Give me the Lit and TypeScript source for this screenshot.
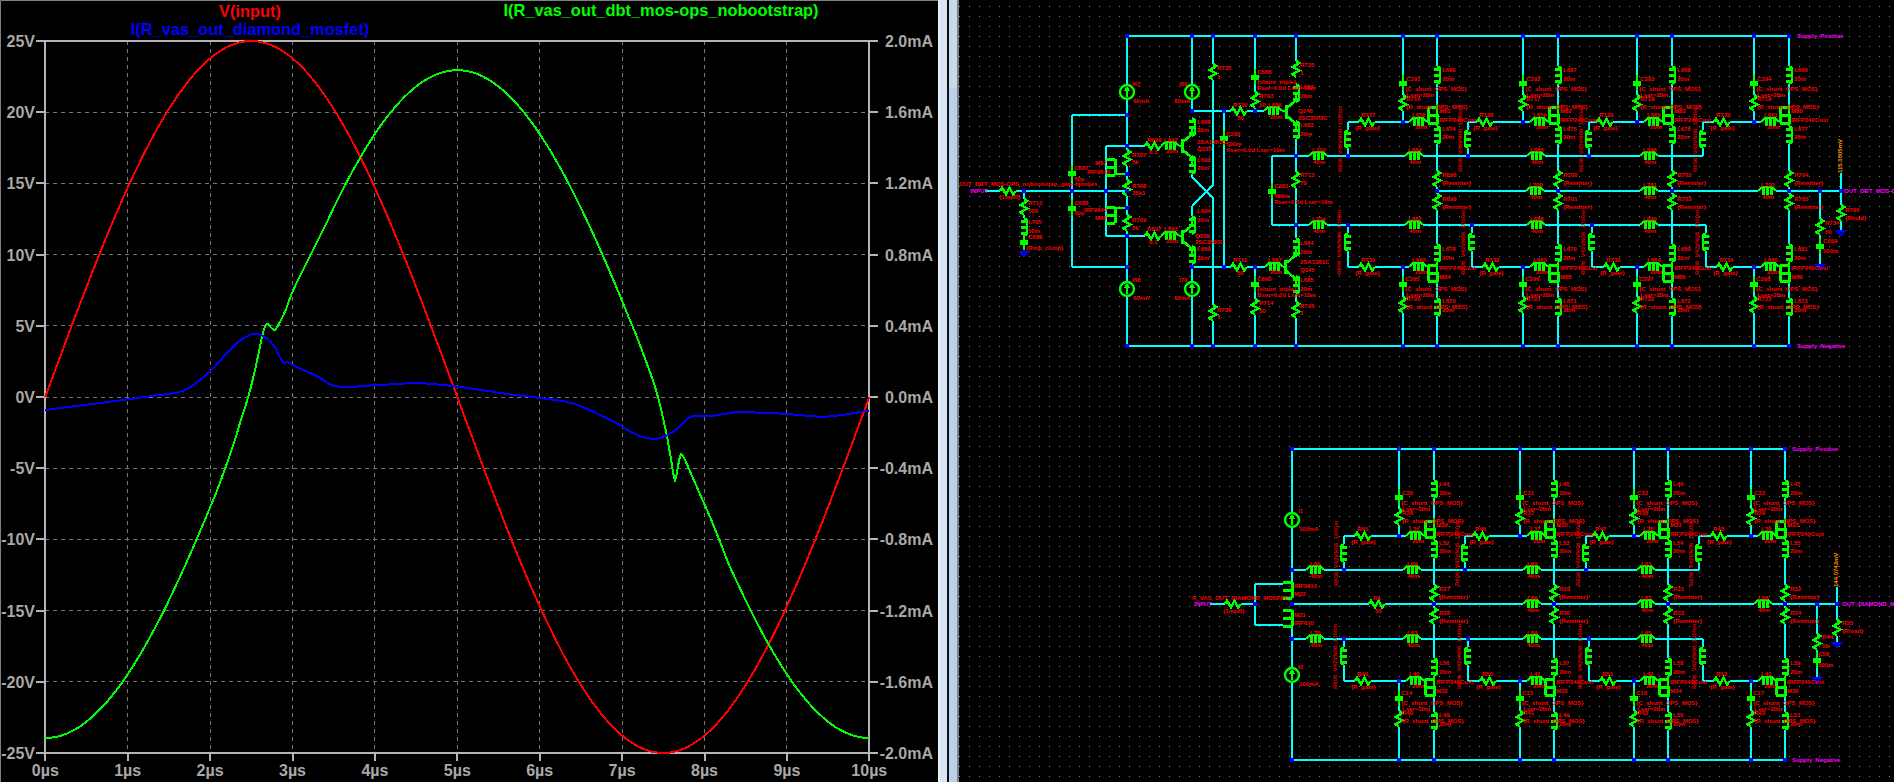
import { LitElement, html, svg, css } from "lit";
import { customElement } from "lit/decorators.js";

/* ---------- waveform plot ---------- */
const X0 = 45.3, XS = 82.4, YT = 41, YB = 753, YC = 397;
const xOf = (t: number) => X0 + XS * t;

function smooth(p: number[][]): string {
  let d = `M${p[0][0].toFixed(1)} ${p[0][1].toFixed(1)}`;
  for (let i = 0; i < p.length - 1; i++) {
    const a = p[Math.max(i - 1, 0)], b = p[i], c = p[i + 1], e = p[Math.min(i + 2, p.length - 1)];
    const c1x = b[0] + (c[0] - a[0]) / 6, c1y = b[1] + (c[1] - a[1]) / 6;
    const c2x = c[0] - (e[0] - b[0]) / 6, c2y = c[1] - (e[1] - b[1]) / 6;
    d += `C${c1x.toFixed(1)} ${c1y.toFixed(1)} ${c2x.toFixed(1)} ${c2y.toFixed(1)} ${c[0].toFixed(1)} ${c[1].toFixed(1)}`;
  }
  return d;
}

const redPts: number[][] = [];
for (let t = 0; t <= 10.001; t += 0.05) redPts.push([xOf(t), YC - 356 * Math.sin((2 * Math.PI * t) / 10)]);

const greenModel = (t: number) => YC - 178 * (-1.876 * Math.cos((2 * Math.PI * t) / 10) - 0.04);
const greenPts: number[][] = [];
for (let t = 0; t <= 2.2; t += 0.1) greenPts.push([xOf(t), greenModel(t)]);
greenPts.push(
  [233.3, 445], [240, 423], [248.3, 396.7], [255, 370], [260, 346.7], [263.3, 331.7], [267.3, 324],
  [271.7, 328.3], [275, 330], [278.3, 325], [285, 311.7], [293.3, 290], [308, 260], [320, 236],
);
for (let t = 3.4; t <= 7.21; t += 0.1) greenPts.push([xOf(t), greenModel(t)]);
greenPts.push([656, 390], [666.7, 435], [674, 477], [676, 477], [680, 456.7], [683.3, 456.7], [696.7, 486.7], [711.7, 521]);
for (let t = 8.3; t <= 10.001; t += 0.1) greenPts.push([xOf(t), greenModel(t)]);

const bluePts: number[][] = [
  [45, 410], [100, 403], [160, 395], [173.3, 393.3], [186.7, 389.3], [200, 380], [213.3, 368.3], [226.7, 353.3],
  [240, 340.7], [250, 335], [256.7, 333.7], [266.7, 338.3], [275, 347.3], [282.7, 361.7], [288.3, 362.7],
  [301.7, 369.3], [316.7, 376], [333.3, 385.7], [353.3, 386.7], [376.7, 385], [400, 384], [417, 383], [457, 386.5],
  [507, 394], [568, 402.2], [600, 415], [616.7, 423.3], [633.3, 433.3], [646.7, 438], [660, 438], [673.3, 431.7],
  [688.3, 418.3], [695, 416], [713.3, 415.7], [738.3, 412], [760, 412.7], [786.7, 414], [820, 416.7], [840, 415.3], [869, 410.5],
];

/* ---------- schematic ---------- */
type Lab = { x: number; y: number; s: string; c: string; rot?: boolean };
interface Sch { w: string; g: string; t: string; e: string; j: string; b: string; labs: Lab[]; circles: number[][] }

function build(): Sch {
  let w = "", g = "", tk = "", e = "", j = "", b = "";
  const labs: Lab[] = [];
  const circles: number[][] = [];
  const W = (...p: number[]) => {
    w += `M${p[0]} ${p[1]}`;
    for (let i = 2; i < p.length; i += 2) w += `L${p[i]} ${p[i + 1]}`;
  };
  const J = (x: number, y: number) => { j += `M${x - 2} ${y - 2}h4v4h-4z`; };
  const T = (x: number, y: number, s: string, c = "lbl") => { labs.push({ x, y: y + 2, s, c }); };
  const ROT = (x: number, y: number, s: string, c = "lbl dim") => { labs.push({ x, y, s, c, rot: true }); };
  const E = (x: number, y: number, ww: number, h: number) => { e += `M${x - ww} ${y - h}h${ww * 2}v${h * 2}h${-ww * 2}z`; };

  const RV = (x: number, y: number) => {
    E(x, y, 2, 8);
    g += `M${x} ${y - 8}L${x + 3.5} ${y - 6}L${x - 3.5} ${y - 2}L${x + 3.5} ${y + 1.5}L${x - 3.5} ${y + 5}L${x} ${y + 8}`;
  };
  const RH = (x: number, y: number) => {
    E(x, y, 8, 2);
    g += `M${x - 8} ${y}L${x - 6} ${y - 3.5}L${x - 2} ${y + 3.5}L${x + 1.5} ${y - 3.5}L${x + 5} ${y + 3.5}L${x + 8} ${y}`;
  };
  const LV = (x: number, y: number, left = false) => {
    E(x, y, 2, 9);
    const s = left ? -1 : 1;
    g += `M${x} ${y - 9}L${x + 3 * s} ${y - 7}V${y + 7}L${x} ${y + 9}`;
    const o = x + 3 * s, i = x - 3 * s;
    tk += `M${o} ${y - 6}H${i}M${o} ${y}H${i}M${o} ${y + 6}H${i}`;
  };
  const LH = (x: number, y: number, ww = 9) => {
    E(x, y, ww, 2);
    g += `M${x - ww} ${y}L${x - 5} ${y - 4}H${x + 5}L${x + ww} ${y}`;
    tk += `M${x - 4} ${y - 4}V${y + 4}M${x} ${y - 4}V${y + 4}M${x + 4} ${y - 4}V${y + 4}`;
  };
  const CAP = (x: number, y: number) => {
    g += `M${x} ${y - 8}V${y + 8}`;
    tk += `M${x - 4} ${y - 1}H${x + 4}M${x - 4} ${y + 1}H${x + 4}`;
  };
  const IS = (x: number, y: number) => {
    E(x, y, 7, 7);
    circles.push([x, y]);
    g += `M${x} ${y - 5}V${y + 5}M${x - 2} ${y - 1}L${x} ${y - 4}L${x + 2} ${y - 1}`;
  };
  const MOS = (D: number, y: number) => {
    E(D, y, 2, 8);
    tk += `M${D - 9} ${y - 8}H${D}M${D - 9} ${y - 8}V${y + 8}M${D - 9} ${y}H${D}V${y + 9}M${D - 9} ${y + 8}H${D}`;
  };
  const MOSL = (X: number, y: number) => {
    tk += `M${X + 9} ${y - 8}H${X}M${X + 9} ${y - 8}V${y + 8}M${X + 9} ${y}H${X}M${X + 9} ${y + 8}H${X}`;
  };
  const BJT = (x: number, y: number, X: number) => {
    tk += `M${x} ${y - 7}V${y + 7}`;
    g += `M${x} ${y - 3}L${X} ${y - 12}V${y - 20}M${x} ${y + 3}L${X} ${y + 12}V${y + 18}`;
  };
  const GND = (x: number, y: number) => { b += `M${x - 4} ${y}H${x + 4}L${x} ${y + 4}Z`; };

  /* ---- upper circuit: driver part ---- */
  const top = 36, bot = 346;
  W(1127, top, 1789, top);
  W(1127, bot, 1789, bot);
  W(1127, top, 1127, bot);
  IS(1127, 92); IS(1127, 289);
  W(1192, top, 1192, 111); IS(1192, 92);
  W(1192, 267, 1192, bot); IS(1192, 289);
  W(1213, top, 1213, 185, 1192, 206);
  W(1192, 177, 1213, 198, 1213, bot);
  RV(1213, 72); RV(1213, 313);
  W(1192, 111, 1296 - 22, 111);
  W(1192, 267, 1296 - 22, 267);
  W(1224, 111, 1224, 267);
  RH(1239, 111); RH(1239, 267);
  CAP(1224, 138);
  W(1255, top, 1255, 111); CAP(1255, 77); RV(1255, 100);
  W(1255, 267, 1255, bot); CAP(1255, 284); RV(1255, 307);
  LH(1273, 111); LH(1274, 267);
  g += "M1282 111H1286M1283 267H1286";
  W(1296, top, 1296, 75); RV(1296, 69);
  BJT(1286, 112, 1296); LV(1296, 93);
  LV(1296, 130); W(1296, 139, 1296, 225);
  RV(1296, 180);
  W(1296, 225, 1296, 238);
  LV(1296, 247); BJT(1285, 267, 1296);
  LV(1296, 285); W(1296, 292, 1296, bot); RV(1296, 310);

  BJT(1182, 146, 1192); LV(1194 - 2, 127);
  LV(1192, 165);
  BJT(1182, 237, 1192); LV(1192, 225); LV(1192, 255);
  W(1192, 173, 1192, 177); W(1192, 206, 1192, 216);
  W(1106, 146, 1148, 146); W(1106, 236, 1148, 236);
  W(1106, 146, 1106, 236);
  RH(1153, 146); RH(1153, 236);
  LH(1170, 146); LH(1170, 236);
  g += "M1179 146H1182M1179 236H1182";
  W(1072, 115, 1127, 115);
  W(1072, 267, 1127, 267);
  W(1072, 115, 1072, 267);
  CAP(1072, 173); CAP(1072, 208);
  W(985, 191, 1106, 191);
  RH(1008, 191);
  W(1024, 191, 1024, 250);
  RV(1024, 207); LV(1024, 227); CAP(1024, 242);
  GND(1024, 252);
  RV(1127, 158); RV(1127, 188); RV(1127, 223);
  MOSL(1106, 167); MOSL(1106, 215);
  g += "M1115 174H1127M1115 208H1127";
  W(1115, 174, 1127, 174); 
  [[1127, top], [1192, top], [1213, top], [1255, top], [1296, top], [1127, bot], [1192, bot], [1213, bot], [1255, bot], [1296, bot],
   [1127, 115], [1127, 146], [1127, 174], [1127, 191], [1127, 208], [1127, 236], [1127, 267],
   [1192, 111], [1224, 111], [1255, 111], [1192, 267], [1224, 267], [1255, 267],
   [1024, 191], [1072, 191], [1106, 191], [1296, 156], [1296, 225],
  ].forEach((p) => J(p[0], p[1]));
  W(1127, 191, 1106, 191);

  [
    [1132, 84, "I67"], [1133, 101, "60mA"], [1179, 84, "I69"], [1174, 101, "60mA"], [1217, 68, "R735"], [1217, 77, "1"],
    [1257, 72, "C688"], [1257, 82, "{shunt_triple}"], [1257, 88, "Rser=0.0d Lser=10m"], [1259, 96, "R703"], [1259, 105, "50"],
    [1233, 105, "R730"], [1237, 118, "50"], [1197, 122, "L688"], [1197, 130, "20m"], [1226, 134, "C390"], [1226, 144, "500m"],
    [1226, 150, "Rser=0.0d Lser=10m"], [1197, 142, "2SA1381C"], [1197, 149, "Q235"], [1197, 160, "L690"], [1197, 168, "20m"],
    [1147, 140, "R696"], [1149, 152, "0.1"], [1164, 140, "L692"], [1166, 151, "20m"], [1132, 155, "R707"], [1132, 162, "5k"],
    [1132, 186, "R708"], [1132, 193, "25k1"], [1095, 163, "M87"], [1087, 172, "IRF9640"], [1074, 168, "C687"], [1074, 179, "50p"],
    [959, 184, "OUT_DBT_MOS-OPS_nobootstrap_gate-families"], [999, 197, "{1mpR}"],
    [1028, 203, "R715"], [1028, 211, "500"], [1028, 222, "L705"], [1028, 231, "50m"], [1028, 237, "C686"], [1026, 248, "{Rmp_comp}"],
    [1074, 203, "C688"], [1074, 213, "50p"], [1084, 210, "IRF9640"], [1095, 218, "M88"], [1132, 220, "R709"], [1132, 228, "5k"],
    [1147, 229, "R697"], [1149, 242, "0.1"], [1164, 229, "L693"], [1166, 241, "20m"], [1197, 211, "L694"], [1197, 220, "20m"],
    [1195, 236, "Q236"], [1195, 242, "2SC3503C"], [1197, 249, "L689"], [1197, 258, "20m"], [1233, 260, "R711"], [1237, 273, "50"],
    [1132, 280, "I68"], [1133, 298, "60mA"], [1179, 280, "I70"], [1174, 298, "60mA"], [1217, 310, "R736"], [1217, 317, "1"],
    [1257, 279, "C690"], [1257, 289, "{shunt_triple}"], [1257, 295, "Rser=0.0d Lser=10m"], [1259, 303, "R714"], [1259, 311, "50"],
    [1300, 65, "R725"], [1300, 73, "1"], [1300, 87, "L682"], [1300, 96, "20m"], [1268, 105, "L686"], [1270, 117, "20m"],
    [1298, 111, "Q246"], [1298, 118, "2SC3503C"], [1300, 125, "L683"], [1300, 134, "20m"], [1312, 150, "L703"], [1313, 162, "40m"],
    [1300, 175, "R713"], [1300, 183, "70"], [1274, 186, "C381"], [1274, 196, "500m"], [1274, 202, "Rser=0.0d Lser=10m"],
    [1312, 219, "L704"], [1313, 231, "40m"], [1300, 243, "L684"], [1300, 252, "20m"], [1300, 262, "2SA1381C"], [1300, 270, "Q345"],
    [1300, 280, "L685"], [1300, 289, "20m"], [1300, 306, "R726"], [1300, 313, "1"], [1268, 260, "L687"], [1270, 272, "20m"],
  ].forEach((l) => T(l[0] as number, l[1] as number, l[2] as string));
  T(970, 191, "INPUT", "lbl net");

  /* rails of the upper output stage */
  W(1272, 156, 1703, 156); W(1272, 225, 1706, 225); W(1272, 156, 1272, 225); CAP(1272, 191);
  W(1437, 191, 1841, 191);
  [1318].forEach((x) => { LH(x, 156); LH(x, 225); });
  [1414, 1536, 1649].forEach((x) => { LH(x, 156); LH(x, 225); });
  LH(1535, 191); LH(1649, 191); LH(1767, 191);
  [[1414, "L684"], [1536, "L685"], [1649, "L696"]].forEach(([x, n]) => {
    T((x as number) - 6, 150, n as string); T((x as number) - 5, 162, "40m");
  });
  [[1414, "L687"], [1536, "L688"], [1649, "L699"]].forEach(([x, n]) => {
    T((x as number) - 6, 219, n as string); T((x as number) - 5, 231, "40m");
  });
  [[1535, "L700"], [1649, "L791"], [1767, "L793"]].forEach(([x, n]) => {
    T((x as number) - 6, 185, n as string); T((x as number) - 5, 197, "40m");
  });

  /* output-stage columns, shared by both circuits */
  type Cfg = {
    dy: number; top: number; out: number; D: number[]; C: number[];
    uG: number[]; uR: number[]; uL: number[]; lG: number[]; lR: number[]; lL: number[];
    n: Record<string, string[]>;
  };
  const stages = (c: Cfg) => {
    const d = c.dy, bt = 346 + d, up = 156 + d, lo = 225 + d, gu = 122 + d, gl = 267 + d;
    c.D.forEach((D, i) => {
      const C = c.C[i], n = c.n;
      W(D, c.top, D, bt);
      W(C, c.top, C, gu); W(C, gl, C, bt);
      J(D, c.top); J(C, c.top); J(D, bt); J(C, bt); J(C, gu); J(C, gl); J(D, c.out);
      LV(D, 75 + d); MOS(D, 115 + d); g += `M${D} ${104 + d}V${126 + d}`; LV(D, 135 + d);
      RV(D, 179 + d); RV(D, 202 + d);
      LV(D, 253 + d); MOS(D, 273 + d); g += `M${D} ${262 + d}V${284 + d}`; LV(D, 307 + d);
      CAP(C, 83 + d); RV(C, 103 + d); CAP(C, 284 + d); RV(C, 305 + d);
      const G = c.uG[i], G2 = c.lG[i];
      W(G, gu, c.uL[i] - 9, gu); W(G, up, G, gu); LV(G, 139 + d, true); RH(c.uR[i], gu);
      LH(c.uL[i], gu); g += `M${c.uL[i] + 9} ${gu}H${D - 9}`;
      W(G2, gl, c.lL[i] - 9, gl); W(G2, lo, G2, gl); LV(G2, 242 + d, true); RH(c.lR[i], gl);
      LH(c.lL[i], gl); g += `M${c.lL[i] + 9} ${gl}H${D - 9}`;
      if (i < 3) { J(G, up); J(G2, lo); }

      T(C + 3, 79 + d, n.cu[i]); T(C + 2, 89 + d, "{C_shunt_OPS_MOS}"); T(C + 3, 95 + d, "Lser=20m"); T(C + 3, 99 + d, n.ru[i]);
      T(C + 3, 107 + d, "{R_shunt_OPS_MOS}");
      T(D + 5, 70 + d, n.ld[i]); T(D + 5, 79 + d, "20m");
      T(D + 2, 111 + d, n.mu[i]); T(D + 2, 120 + d, "IRFP240Cust");
      T(D + 5, 129 + d, n.ls[i]); T(D + 5, 137 + d, "20m");
      T(D + 5, 175 + d, n.e1[i]); T(D + 5, 183 + d, "{Remitter}");
      T(D + 5, 199 + d, n.e2[i]); T(D + 5, 207 + d, "{Remitter}");
      T(c.uR[i] - 6, 115 + d, n.gu[i]); T(c.uR[i] - 12, 128 + d, "{R_gate}");
      T(c.uL[i] - 6, 115 + d, n.lu[i]); T(c.uL[i] - 3, 127 + d, "20m");
      ROT(G - 6, 172 + d, "R606_V42VN06_1000m");
      T(c.lR[i] - 6, 260 + d, n.gl[i]); T(c.lR[i] - 12, 273 + d, "{R_gate}");
      T(c.lL[i] - 6, 260 + d, n.ll[i]); T(c.lL[i] - 3, 272 + d, "20m");
      T(D + 2, 268 + d, "IRFP240Cust"); T(D + 2, 277 + d, n.ml[i]);
      T(C + 2, 279 + d, n.cl[i]); T(C + 2, 289 + d, "{C_shunt_OPS_MOS}"); T(C + 3, 295 + d, "Lser=20m"); T(C + 3, 299 + d, n.rl[i]);
      T(C + 3, 307 + d, "{R_shunt_OPS_MOS}");
      T(D + 5, 249 + d, n.lt[i]); T(D + 5, 258 + d, "20m"); T(D + 5, 301 + d, n.lb[i]); T(D + 5, 310 + d, "20m");
      ROT(G2 - 7, 275 + d, "R606_V42VN06_1000m");
    });
  };

  stages({
    dy: 0, top: 36, out: 191,
    D: [1437, 1558, 1672, 1789], C: [1403, 1523, 1637, 1754],
    uG: [1348, 1468, 1589, 1703], uR: [1367, 1485, 1605, 1722], uL: [1418, 1539, 1653, 1770],
    lG: [1348, 1472, 1592, 1706], lR: [1367, 1491, 1612, 1725], lL: [1418, 1539, 1653, 1770],
    n: {
      cu: ["C391", "C392", "C393", "C394"], ru: ["R716", "R717", "R718", "R719"], ld: ["L666", "L667", "L668", "L669"],
      mu: ["M81", "M82", "M83", "M80"], ls: ["L674", "L675", "L676", "L677"], e1: ["R698", "R700", "R702", "R704"],
      e2: ["R699", "R701", "R703", "R705"], gu: ["R727", "R728", "R729", "R730"], lu: ["L658", "L659", "L660", "L661"],
      gl: ["R731", "R732", "R733", "R734"], ll: ["L662", "L663", "L664", "L665"], ml: ["M84", "M85", "M86", "M89"],
      cl: ["C395", "C396", "C397", "C398"], rl: ["R720", "R721", "R722", "R723"], lt: ["L678", "L679", "L680", "L681"],
      lb: ["L670", "L671", "L672", "L673"],
    },
  });

  /* upper circuit output */
  W(1820, 191, 1820, 265); RV(1820, 227); CAP(1820, 246); GND(1820, 265);
  W(1841, 173, 1841, 231); RV(1841, 213); GND(1841, 231);
  J(1820, 191); J(1841, 191);
  T(1825, 223, "R734"); T(1825, 232, "50"); T(1823, 241, "C699"); T(1823, 251, "500m"); T(1845, 210, "R706"); T(1845, 218, "{Rload}");
  ROT(1842, 173, "115.0005mV", "lbl probe");
  T(1797, 36, "Supply_Positive", "lbl net");
  T(1797, 346, "Supply_Negative", "lbl net");
  T(1844, 191, "OUT_DBT_MOS-OPS", "lbl net");

  /* ---- lower circuit ---- */
  const t2 = 449, b2 = 760;
  W(1292, t2, 1785, t2); W(1292, b2, 1785, b2);
  W(1292, t2, 1292, 582); W(1292, 626, 1292, b2);
  IS(1292, 520); IS(1292, 675);
  W(1292, 570, 1699, 570); W(1292, 639, 1703, 639); W(1292, 604, 1837, 604);
  W(1210, 604, 1255, 604); RH(1233, 604);
  W(1255, 584, 1283, 584); W(1255, 625, 1283, 625); W(1255, 584, 1255, 625);
  MOSL(1283, 590); MOSL(1283, 618);
  g += "M1292 582V598M1292 610V626";
  RH(1377, 604);
  [1315, 1412, 1532, 1646].forEach((x) => { LH(x, 570); LH(x, 639); });
  [1532, 1646, 1763].forEach((x) => LH(x, 604));
  [[1292, t2], [1292, 570], [1292, 604], [1292, 639], [1292, b2], [1255, 604]].forEach((p) => J(p[0], p[1]));
  [[1315, "L60"], [1412, "L69"], [1532, "L62"], [1646, "L61"]].forEach(([x, n]) => {
    T((x as number) - 5, 564, n as string); T((x as number) - 5, 575 + 1, "40m");
  });
  [[1315, "L70"], [1412, "L63"], [1532, "L64"], [1646, "L65"]].forEach(([x, n]) => {
    T((x as number) - 5, 633, n as string); T((x as number) - 5, 645, "40m");
  });
  [[1532, "L66"], [1646, "L67"], [1763, "L68"]].forEach(([x, n]) => {
    T((x as number) - 5, 598, n as string); T((x as number) - 5, 610, "40m");
  });
  [
    [1298, 511, "I1"], [1299, 529, "100mA"], [1298, 667, "I2"], [1299, 684, "100mA"], [1294, 586, "IRF9610"], [1294, 594, "M22"],
    [1294, 615, "M21"], [1294, 623, "IRF610"], [1192, 598, "R_VAS_OUT_DIAMOND_MOSFET"], [1223, 611, "{1mpR}"], [1373, 598, "R1"], [1375, 611, "50"],
    [1822, 637, "R44"], [1822, 646, "50"], [1818, 654, "C58"], [1818, 665, "500m"], [1842, 623, "R35"], [1842, 631, "{Rload}"],
  ].forEach((l) => T(l[0] as number, l[1] as number, l[2] as string));
  T(1194, 604, "INPUT", "lbl net");

  stages({
    dy: 414, top: 449, out: 604,
    D: [1434, 1554, 1668, 1785], C: [1399, 1520, 1634, 1751],
    uG: [1344, 1465, 1586, 1699], uR: [1363, 1481, 1601, 1719], uL: [1415, 1536, 1649, 1767],
    lG: [1344, 1468, 1589, 1703], lR: [1363, 1488, 1608, 1722], lL: [1415, 1536, 1649, 1767],
    n: {
      cu: ["C30", "C31", "C32", "C33"], ru: ["R36", "R37", "R38", "R39"], ld: ["L44", "L45", "L46", "L47"],
      mu: ["M29", "M30", "M31", "M33"], ls: ["L52", "L53", "L54", "L55"], e1: ["R27", "R29", "R31", "R32"],
      e2: ["R28", "R30", "R33", "R34"], gu: ["R45", "R46", "R47", "R48"], lu: ["L36", "L37", "L38", "L39"],
      gl: ["R49", "R50", "R51", "R52"], ll: ["L40", "L41", "L42", "L43"], ml: ["M32", "M35", "M34", "M36"],
      cl: ["C14", "C15", "C16", "C17"], rl: ["R40", "R41", "R42", "R43"], lt: ["L56", "L57", "L58", "L59"],
      lb: ["L48", "L49", "L50", "L51"],
    },
  });
  W(1817, 604, 1817, 678); RV(1817, 642); CAP(1817, 660); GND(1817, 678);
  W(1837, 587, 1837, 643); RV(1837, 628); GND(1837, 643);
  J(1817, 604); J(1837, 604);
  ROT(1838, 587, "144.0743mV", "lbl probe");
  T(1792, 449, "Supply_Positive", "lbl net");
  T(1792, 760, "Supply_Negative", "lbl net");
  T(1842, 604, "OUT_DIAMOND_MOS", "lbl net");

  return { w, g, t: tk, e, j, b, labs, circles };
}

const SCH = build();

@customElement("app-root")
export class AppRoot extends LitElement {
  static styles = css`
    :host { display: flex; width: 1894px; height: 782px; overflow: hidden; background: #000; }
    .plot { flex: 0 0 938px; height: 782px; display: block; background: #000; }
    .split-a { flex: 0 0 9px; background: linear-gradient(90deg, #f4f8fc 0, #d7e5f4 25%, #d7e5f4 100%); }
    .split-line { flex: 0 0 2px; background: #101010; }
    .split-b { flex: 0 0 8px; background: linear-gradient(180deg, #c9d9ea 0, #c9d9ea 88px, #b9d1ea 88px, #b9d1ea 100%); }
    .split-edge { flex: 0 0 2px; background: #808080; }
    .sch { flex: 0 0 935px; height: 782px; display: block; background: #000; }

    .frame { stroke: #808080; stroke-width: 1; fill: none; }
    .grid { stroke: #777; stroke-width: 1; stroke-dasharray: 4 4; fill: none; shape-rendering: crispEdges; }
    .axis { stroke: #b4b4b4; stroke-width: 2; fill: none; shape-rendering: crispEdges; }
    .tick { font: bold 16px "Liberation Sans", Arial, sans-serif; fill: #a8a8a8; }
    .ttl { font: bold 16.4px "Liberation Sans", Arial, sans-serif; text-anchor: middle; }
    .tr { fill: #ff0000; } .tg { fill: #00ff00; } .tb { fill: #0000ff; }
    .trace { fill: none; stroke-width: 2; stroke-linejoin: round; shape-rendering: crispEdges; }
    .sr { stroke: #ff0000; } .sg { stroke: #00ff00; } .sb { stroke: #0000ff; }

    .wire { stroke: #00ffff; stroke-width: 2; fill: none; shape-rendering: crispEdges; }
    .erase { fill: #000; }
    .comp { stroke: #00ff00; stroke-width: 2.4; fill: none; shape-rendering: crispEdges; }
    .comb { stroke: #00ff00; stroke-width: 3; fill: none; shape-rendering: crispEdges; }
    .ring { stroke: #00ff00; stroke-width: 2.4; fill: #000; }
    .junc { fill: #0000ff; shape-rendering: crispEdges; }
    .gnd { stroke: #0000ff; stroke-width: 2; fill: none; }
    .lbl { font: bold 6px "Liberation Sans", Arial, sans-serif; fill: #ff0000; }
    .dim { fill: #d80000; }
    .net { fill: #ff00ff; }
    .probe { fill: #ff9900; }
    .dot { fill: #808080; }
  `;

  private plot() {
    const vs = [25, 20, 15, 10, 5, 0, -5, -10, -15, -20, -25];
    const ma = ["2.0", "1.6", "1.2", "0.8", "0.4", "0.0", "-0.4", "-0.8", "-1.2", "-1.6", "-2.0"];
    const ys = vs.map((_, i) => YT + i * 71.2);
    const ts = [0, 1, 2, 3, 4, 5, 6, 7, 8, 9, 10];
    return html`<svg class="plot" viewBox="0 0 938 782" width="938" height="782">
      <path class="frame" d="M.5 782V.5H938" />
      ${ys.slice(1, 10).map((y) => svg`<path class="grid" d="M45 ${y}H869" />`)}
      ${ts.slice(1, 10).map((t) => svg`<path class="grid" d="M${xOf(t)} 41V753" />`)}
      <path class="axis" d="M45 41H869V753H45Z" />
      ${ys.map((y) => svg`<path class="axis" d="M36 ${y}H45M869 ${y}H878" />`)}
      ${ts.map((t) => svg`<path class="axis" d="M${xOf(t)} 753V761" />`)}
      ${vs.map((v, i) => svg`<text class="tick" x="35" y=${ys[i] + 6} text-anchor="end">${v}V</text>`)}
      ${ma.map((m, i) => svg`<text class="tick" x="933" y=${ys[i] + 6} text-anchor="end">${m}mA</text>`)}
      ${ts.map((t) => svg`<text class="tick" x=${xOf(t)} y="776" text-anchor="middle">${t}µs</text>`)}
      <text class="ttl tr" x="250" y="17">V(input)</text>
      <text class="ttl tb" x="250" y="35">I(R_vas_out_diamond_mosfet)</text>
      <text class="ttl tg" x="661" y="16">I(R_vas_out_dbt_mos-ops_nobootstrap)</text>
      <path class="trace sr" d=${smooth(redPts)} />
      <path class="trace sg" d=${smooth(greenPts)} />
      <path class="trace sb" d=${smooth(bluePts)} />
    </svg>`;
  }

  private schematic() {
    const s = SCH;
    return html`<svg class="sch" viewBox="959 0 935 782" width="935" height="782">
      <defs>
        <pattern id="dots" x="969" y="6" width="10" height="10" patternUnits="userSpaceOnUse">
          <rect class="dot" width="1" height="1"></rect>
        </pattern>
      </defs>
      <rect x="959" y="0" width="935" height="782" fill="url(#dots)"></rect>
      <path class="wire" d=${s.w} />
      <path class="erase" d=${s.e} />
      ${s.circles.map((c) => svg`<circle class="ring" cx=${c[0]} cy=${c[1]} r="7"></circle>`)}
      <path class="comp" d=${s.g} />
      <path class="comb" d=${s.t} />
      <path class="gnd" d=${s.b} />
      <path class="junc" d=${s.j} />
      ${s.labs.map((l) =>
        l.rot
          ? svg`<text class=${l.c} transform="rotate(-90 ${l.x} ${l.y})" x=${l.x} y=${l.y}>${l.s}</text>`
          : svg`<text class=${l.c} x=${l.x} y=${l.y}>${l.s}</text>`,
      )}
    </svg>`;
  }

  render() {
    return html`${this.plot()}
      <div class="split-a"></div>
      <div class="split-line"></div>
      <div class="split-b"></div>
      <div class="split-edge"></div>
      ${this.schematic()}`;
  }
}
